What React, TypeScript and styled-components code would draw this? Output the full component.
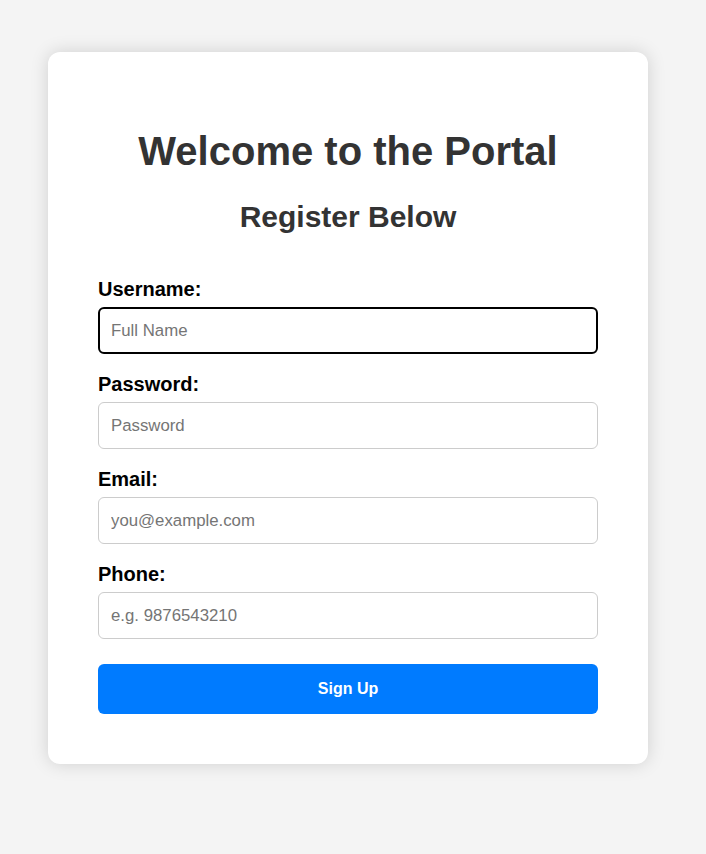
import styled, { createGlobalStyle } from "styled-components";

const GlobalStyle = createGlobalStyle`
  html, body {
    margin: 0;
    padding: 0;
    min-height: 100%;
    background-color: #f4f4f4;
    font-family: "Liberation Sans", Arial, sans-serif;
  }
`;

const Page = styled.div`
  padding: 52px 0 90px 48px;
`;

const Card = styled.div`
  width: 600px;
  box-sizing: border-box;
  padding: 50px;
  background-color: #ffffff;
  border-radius: 12px;
  box-shadow: 0 0 18px rgba(0, 0, 0, 0.15);
`;

const Title = styled.h1`
  margin: 26px 0 25px;
  font-size: 40px;
  line-height: 46px;
  font-weight: bold;
  color: #333333;
  text-align: center;
`;

const Subtitle = styled.h2`
  margin: 0 0 44px;
  font-size: 30px;
  line-height: 35px;
  font-weight: bold;
  color: #333333;
  text-align: center;
`;

const Form = styled.form`
  display: flex;
  flex-direction: column;
`;

const Field = styled.div`
  display: flex;
  flex-direction: column;
  margin-bottom: 19px;
`;

const Label = styled.label`
  font-size: 20px;
  line-height: 23px;
  font-weight: bold;
  color: #000000;
  margin-bottom: 6px;
`;

const Input = styled.input<{ $focused?: boolean }>`
  box-sizing: border-box;
  width: 100%;
  height: 47px;
  padding: 0 12px;
  font-family: "Liberation Sans", Arial, sans-serif;
  font-size: 16.8px;
  color: #333333;
  background-color: #ffffff;
  border: ${(props) => (props.$focused ? "2px solid #000000" : "1px solid #cccccc")};
  padding-left: ${(props) => (props.$focused ? "11px" : "12px")};
  border-radius: 6px;
  outline: none;
  &::placeholder {
    color: #757575;
  }
`;

const Button = styled.button`
  margin-top: 6px;
  height: 50px;
  width: 100%;
  border: none;
  border-radius: 6px;
  background-color: #007bff;
  color: #ffffff;
  font-family: "Liberation Sans", Arial, sans-serif;
  font-size: 16px;
  font-weight: bold;
  cursor: pointer;
`;

const fields = [
  { id: "username", label: "Username:", type: "text", placeholder: "Full Name" },
  { id: "password", label: "Password:", type: "password", placeholder: "Password" },
  { id: "email", label: "Email:", type: "email", placeholder: "you@example.com" },
  { id: "phone", label: "Phone:", type: "tel", placeholder: "e.g. 9876543210" },
];

function App() {
  return (
    <>
      <GlobalStyle />
      <Page>
        <Card>
          <Title>Welcome to the Portal</Title>
          <Subtitle>Register Below</Subtitle>
          <Form onSubmit={(e) => e.preventDefault()}>
            {fields.map((field, i) => (
              <Field key={field.id}>
                <Label htmlFor={field.id}>{field.label}</Label>
                <Input
                  id={field.id}
                  type={field.type}
                  placeholder={field.placeholder}
                  $focused={i === 0}
                />
              </Field>
            ))}
            <Button type="submit">Sign Up</Button>
          </Form>
        </Card>
      </Page>
    </>
  );
}

export default App;
